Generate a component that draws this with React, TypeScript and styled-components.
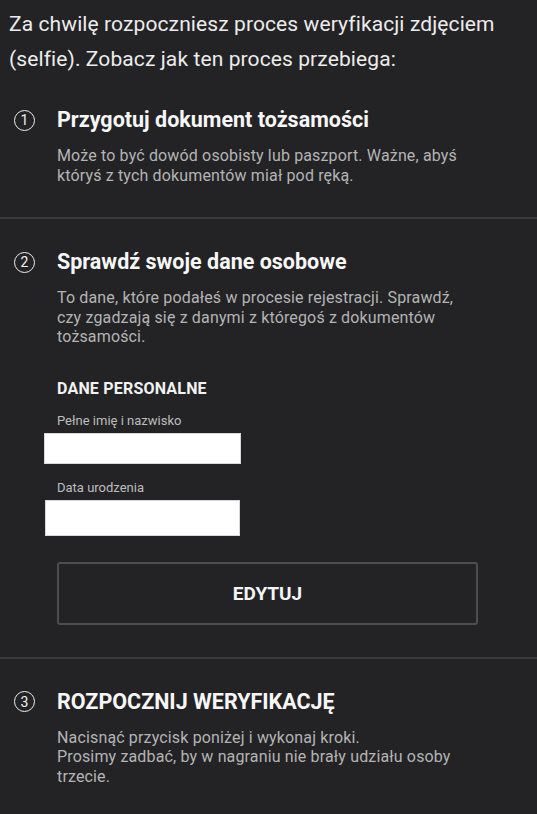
import React, { FunctionComponent } from 'react';
import styled, { createGlobalStyle } from 'styled-components';

const GlobalStyle = createGlobalStyle`
    html, body {
        margin: 0;
        padding: 0;
        background: #232325;
    }
    body {
        font-family: Roboto, 'Liberation Sans', sans-serif;
        -webkit-font-smoothing: antialiased;
    }
`;

interface StepProps {
    number: number;
    title: string;
    children?: React.ReactNode;
}

const Step: FunctionComponent<StepProps> = ({ number, title, children }) => (
    <StepSection>
        <StepHeader>
            <Marker>{number}</Marker>
            <StepTitle>{title}</StepTitle>
        </StepHeader>
        <StepBody>{children}</StepBody>
    </StepSection>
);

const App: FunctionComponent = () => (
    <Page>
        <GlobalStyle />
        <Intro>Za chwilę rozpoczniesz proces weryfikacji zdjęciem (selfie). Zobacz jak ten proces przebiega:</Intro>

        <Step number={1} title="Przygotuj dokument tożsamości">
            <Description>
                Może to być dowód osobisty lub paszport. Ważne, abyś któryś z tych dokumentów miał pod ręką.
            </Description>
        </Step>
        <Divider />

        <Step number={2} title="Sprawdź swoje dane osobowe">
            <Description>
                To dane, które podałeś w procesie rejestracji. Sprawdź, czy zgadzają się z danymi z któregoś z
                dokumentów tożsamości.
            </Description>
            <SectionLabel>DANE PERSONALNE</SectionLabel>
            <FieldLabel>Pełne imię i nazwisko</FieldLabel>
            <FieldValue $height={31} $width={197} $offset={13} />
            <FieldLabel>Data urodzenia</FieldLabel>
            <FieldValue $height={36} $width={195} $offset={12} />
            <OutlineButton type="button">EDYTUJ</OutlineButton>
        </Step>
        <Divider />

        <Step number={3} title="ROZPOCZNIJ WERYFIKACJĘ">
            <Description>
                Nacisnąć przycisk poniżej i wykonaj kroki.
                <br />
                Prosimy zadbać, by w nagraniu nie brały udziału osoby trzecie.
            </Description>
        </Step>
    </Page>
);

export default App;

const Page = styled.main`
    width: 537px;
    min-height: 814px;
    background: #232325;
    overflow: hidden;
`;

const Intro = styled.p`
    margin: 0;
    padding: 7px 9px 0;
    font-size: 21px;
    line-height: 35px;
    letter-spacing: 0.1px;
    color: #ececec;
`;

const StepSection = styled.section`
    padding: 30px 0 32px;
`;

const StepHeader = styled.div`
    display: flex;
    align-items: center;
`;

const Marker = styled.span`
    box-sizing: border-box;
    width: 21px;
    height: 21px;
    margin: 0 22px 0 14px;
    border: 1.5px solid #f0f0f0;
    border-radius: 50%;
    display: flex;
    align-items: center;
    justify-content: center;
    font-size: 14px;
    line-height: 1;
    color: #f0f0f0;
    flex-shrink: 0;
`;

const StepTitle = styled.h2`
    margin: 0;
    font-size: 21.5px;
    line-height: 26px;
    font-weight: 700;
    color: #f7f7f7;
`;

const StepBody = styled.div`
    padding: 0 59px 0 57px;
`;

const Description = styled.p`
    margin: 13px 0 0;
    font-size: 16px;
    line-height: 19.5px;
    letter-spacing: 0.15px;
    color: #b4b4b4;
`;

const SectionLabel = styled.h3`
    margin: 32px 0 0;
    font-size: 16px;
    line-height: 19px;
    letter-spacing: 0.2px;
    font-weight: 700;
    color: #f2f2f2;
`;

const FieldLabel = styled.div`
    margin-top: 15px;
    font-size: 13px;
    line-height: 16px;
    color: #bdbdbd;
`;

const FieldValue = styled.div<{ $height: number; $width: number; $offset: number }>`
    box-sizing: border-box;
    margin: 4px 0 0 ${({ $offset }) => -$offset}px;
    width: ${({ $width }) => $width}px;
    height: ${({ $height }) => $height}px;
    background: #ffffff;
    border: 1px solid #d8d8d8;

    & + ${FieldLabel} {
        margin-top: 16px;
    }
`;

const OutlineButton = styled.button`
    display: block;
    box-sizing: border-box;
    width: 100%;
    height: 63px;
    margin-top: 26px;
    background: transparent;
    border: 2px solid #4d4d50;
    border-radius: 3px;
    font-family: Roboto, 'Liberation Sans', sans-serif;
    font-size: 19px;
    font-weight: 700;
    color: #f5f5f5;
    cursor: pointer;
`;

const Divider = styled.hr`
    margin: 0;
    border: none;
    height: 2px;
    background: #3a3a3d;
`;
